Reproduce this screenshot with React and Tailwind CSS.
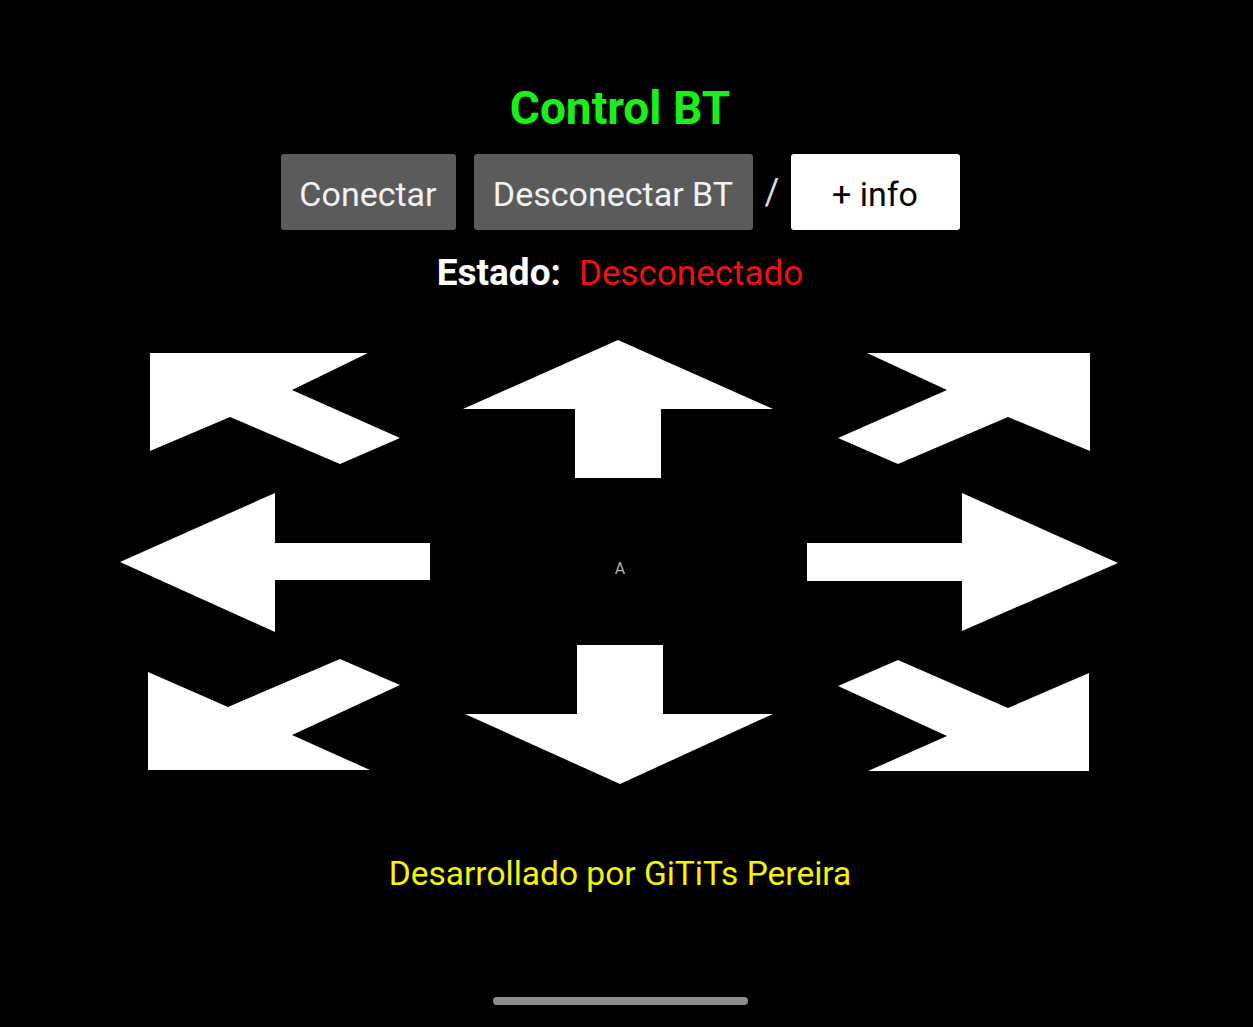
import React from "react";

const COLS = [
  { x: 118, w: 316 },
  { x: 434, w: 372 },
  { x: 806, w: 316 },
];
const ROWS = [
  { y: 338, h: 144 },
  { y: 482, h: 160 },
  { y: 642, h: 144 },
];

const SHAPES = [
  [
    "150,353 368,353 292,390 400,438 340,464 230,417 150,451",
    "618,340 773,409 661,409 661,478 575,478 575,409 463,409",
    "1090,353 867,353 947,390 838,438 898,464 1008,417 1090,451",
  ],
  [
    "120,562 275,493 275,543 430,543 430,580 275,580 275,632",
    null,
    "807,543 962,543 962,493 1118,563 962,631 962,581 807,581",
  ],
  [
    "148,672 228,707 340,659 400,685 292,735 370,770 148,770",
    "577,645 663,645 663,714 773,714 620,784 465,714 577,714",
    "1089,673 1008,708 898,660 838,686 947,736 868,771 1089,771",
  ],
];

function Cell({ r, c }) {
  const col = COLS[c];
  const row = ROWS[r];
  const pts = SHAPES[r][c];
  if (!pts) {
    return (
      <div className="flex items-center justify-center pt-[14px]">
        <span className="text-[16px] leading-none text-[#b0b0b0]">A</span>
      </div>
    );
  }
  return (
    <svg
      width={col.w}
      height={row.h}
      viewBox={`${col.x} ${row.y} ${col.w} ${row.h}`}
      className="block"
    >
      <polygon points={pts} fill="#ffffff" />
    </svg>
  );
}

export default function App() {
  return (
    <div
      className="min-h-screen w-full bg-black"
      style={{ fontFamily: "Roboto, 'Noto Sans', sans-serif" }}
    >
      <div className="w-[1240px] flex flex-col items-center pt-[85px]">
        <h1 className="text-[46px] leading-none font-bold text-[#19f019] h-[46px]">
          Control BT
        </h1>

        <div className="mt-[23px] flex items-center">
          <button className="w-[175px] h-[76px] pt-[3px] rounded-[3px] bg-[#5b5b5b] text-[#f2f2f2] text-[34px] leading-none mr-[18px]">
            Conectar
          </button>
          <button className="w-[279px] h-[76px] pt-[3px] rounded-[3px] bg-[#5b5b5b] text-[#f2f2f2] text-[34px] leading-none">
            Desconectar BT
          </button>
          <span className="mx-[12px] w-[14px] text-center text-[36px] leading-none text-[#d8d8d8]">
            /
          </span>
          <button className="w-[169px] h-[76px] pt-[3px] rounded-[3px] bg-white text-black text-[34px] leading-none">
            + info
          </button>
        </div>

        <div className="mt-[24px] flex items-baseline leading-none h-[36px]">
          <span className="text-[37px] font-bold text-white">Estado:</span>
          <span className="ml-[18px] text-[35px] text-[#f01010]">Desconectado</span>
        </div>

        <div className="mt-12 grid grid-cols-[316px_372px_316px] grid-rows-[144px_160px_144px]">
          {[0, 1, 2].map((r) =>
            [0, 1, 2].map((c) => <Cell key={`${r}-${c}`} r={r} c={c} />)
          )}
        </div>

        <p className="mt-[71px] text-[33.5px] leading-none text-[#f5f500] h-[34px]">
          Desarrollado por GiTiTs Pereira
        </p>

        <div className="mt-[106px] w-[255px] h-2 rounded-full bg-[#8e8e8e]" />
      </div>
    </div>
  );
}
